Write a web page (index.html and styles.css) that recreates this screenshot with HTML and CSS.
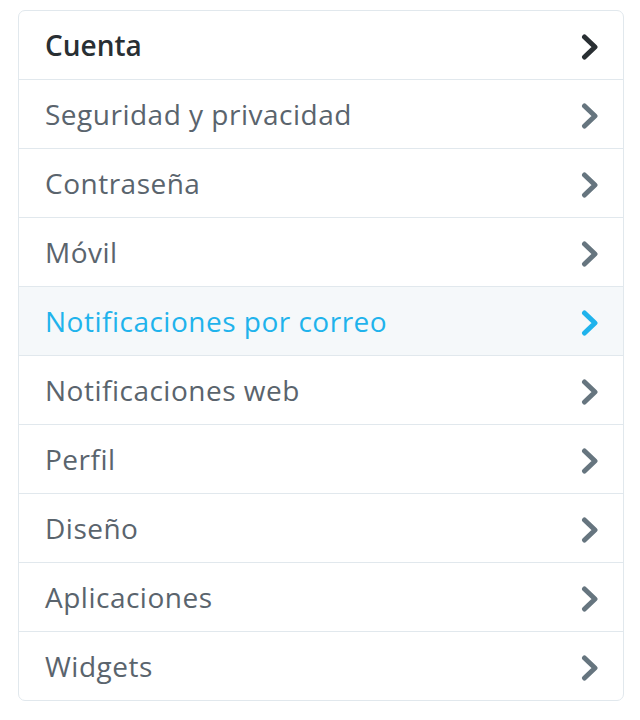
FILE: index.html
```html
<!DOCTYPE html>
<html>
<head>
<meta charset="utf-8">
<link rel="stylesheet" href="styles.css">
</head>
<body>
<ul class="menu">
  <li class="item item-first"><span class="label">Cuenta</span><svg class="chev" viewBox="0 0 18 28"><path d="M3.5 4 L14 14 L3.5 24"/></svg></li>
  <li class="item"><span class="label">Seguridad y privacidad</span><svg class="chev" viewBox="0 0 18 28"><path d="M3.5 4 L14 14 L3.5 24"/></svg></li>
  <li class="item"><span class="label">Contraseña</span><svg class="chev" viewBox="0 0 18 28"><path d="M3.5 4 L14 14 L3.5 24"/></svg></li>
  <li class="item"><span class="label">Móvil</span><svg class="chev" viewBox="0 0 18 28"><path d="M3.5 4 L14 14 L3.5 24"/></svg></li>
  <li class="item item-active"><span class="label">Notificaciones por correo</span><svg class="chev" viewBox="0 0 18 28"><path d="M3.5 4 L14 14 L3.5 24"/></svg></li>
  <li class="item"><span class="label">Notificaciones web</span><svg class="chev" viewBox="0 0 18 28"><path d="M3.5 4 L14 14 L3.5 24"/></svg></li>
  <li class="item"><span class="label">Perfil</span><svg class="chev" viewBox="0 0 18 28"><path d="M3.5 4 L14 14 L3.5 24"/></svg></li>
  <li class="item"><span class="label">Diseño</span><svg class="chev" viewBox="0 0 18 28"><path d="M3.5 4 L14 14 L3.5 24"/></svg></li>
  <li class="item"><span class="label">Aplicaciones</span><svg class="chev" viewBox="0 0 18 28"><path d="M3.5 4 L14 14 L3.5 24"/></svg></li>
  <li class="item"><span class="label">Widgets</span><svg class="chev" viewBox="0 0 18 28"><path d="M3.5 4 L14 14 L3.5 24"/></svg></li>
</ul>
</body>
</html>
```
FILE: styles.css
```css
html, body {
  margin: 0;
  padding: 0;
  background: #ffffff;
}
body {
  padding: 10px 16px 0 18px;
  font-family: "Open Sans", "Liberation Sans", sans-serif;
}
.menu {
  list-style: none;
  margin: 0;
  padding: 0;
  width: 604px;
  border: 1px solid #e1e8ed;
  border-radius: 7px;
  overflow: hidden;
}
.item {
  display: flex;
  align-items: center;
  justify-content: space-between;
  height: 68px;
  padding: 0 24px 0 26px;
  border-top: 1px solid #e1e8ed;
  color: #5a646d;
  font-size: 28px;
  letter-spacing: 0.5px;
}
.item-first {
  border-top: none;
  color: #292f33;
  font-weight: 600;
  letter-spacing: 0;
}
.item-active {
  background: #f5f8fa;
  color: #1fb3ec;
}
.chev {
  width: 18px;
  height: 28px;
  margin-top: 4px;
  fill: none;
  stroke: #66757f;
  stroke-width: 5;
  stroke-linecap: round;
  stroke-linejoin: round;
}
.item-first .chev {
  stroke: #292f33;
}
.item-active .chev {
  stroke: #1fb3ec;
}
```
